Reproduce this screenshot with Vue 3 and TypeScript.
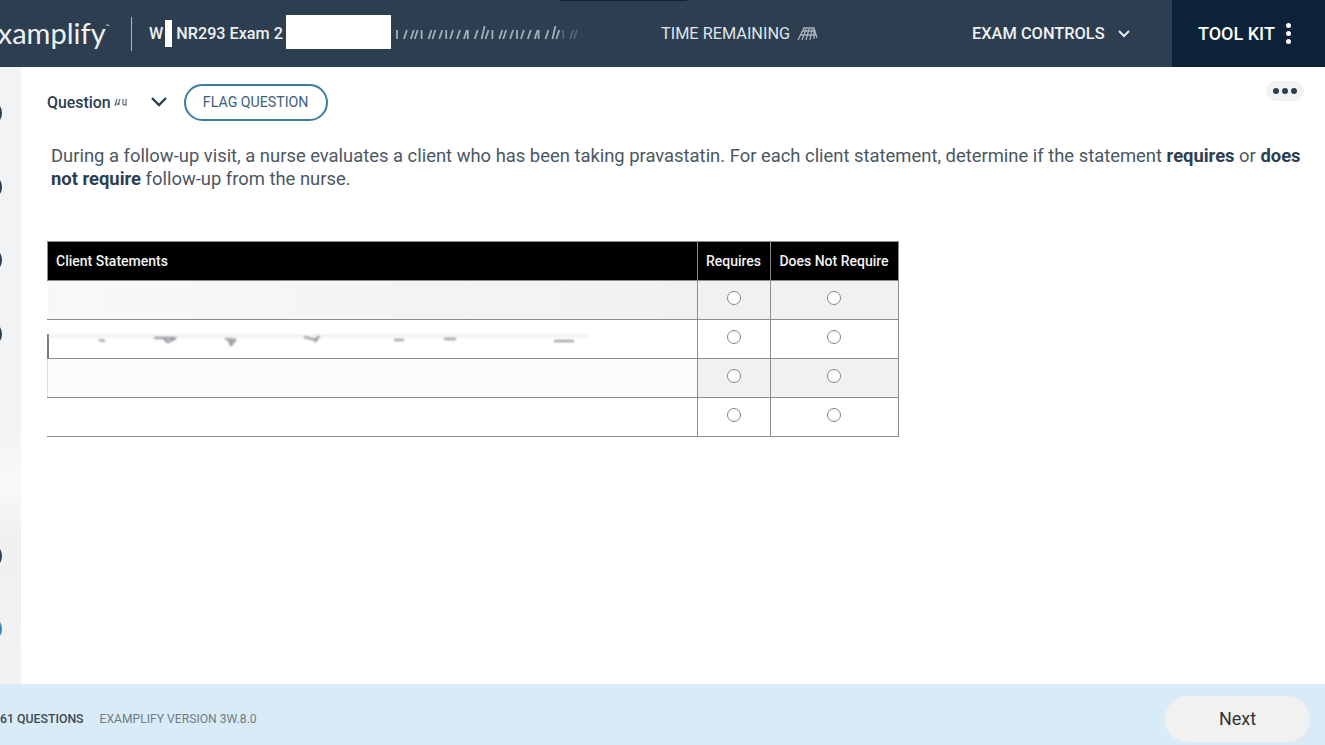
<script setup lang="ts">
interface Row {
  id: number
  shaded: boolean
}

const rows: Row[] = [
  { id: 1, shaded: true },
  { id: 2, shaded: false },
  { id: 3, shaded: true },
  { id: 4, shaded: false },
]

// sidebar markers, the two middle ones are wiped out in the screenshot
const markers = [true, true, true, true, false, false, true, true]

// smudged-out text next to the exam title
const headerMarks = Array.from({ length: 31 }, (_, i) => ({
  x: 2 + i * 5.9 + (i % 3),
  lean: i % 4 === 0 ? 0 : 3,
  top: i === 14 || i === 26 ? 2 : 6,
  dim: i > 27,
}))
</script>

<template>
  <div class="page">
    <div class="top-strip"></div>
    <header class="topbar">
      <div class="brand">Examplify<sup>™</sup></div>
      <div class="divider"></div>
      <div class="exam-title">
        <span>W</span>
        <i class="wipe-bar"></i>
        <span>NR293 Exam 2</span>
        <i class="wipe-box"></i>
      </div>
      <svg class="smudge" width="190" height="20" viewBox="0 0 190 20">
        <line
          v-for="(m, i) in headerMarks"
          :key="i"
          :x1="m.x + m.lean"
          :y1="m.top"
          :x2="m.x"
          y2="15"
          :stroke="m.dim ? '#55677a' : '#a3afba'"
          stroke-width="1.8"
        />
      </svg>
      <div class="time">
        <span>TIME REMAINING</span>
        <svg class="blurred" width="26" height="20" viewBox="0 0 26 20">
          <path d="M3 16 9 4h10l3 10M7 16l4-11M11 16l3-11M15 16l2-11M19 15V5M5 11h16M8 7h12" fill="none" stroke="#a9b3bd" stroke-width="1.3" />
        </svg>
      </div>
      <div class="controls">
        <span>EXAM CONTROLS</span>
        <svg width="14" height="10" viewBox="0 0 14 10">
          <path d="M2 2l5 5 5-5" fill="none" stroke="#e6eaee" stroke-width="2" />
        </svg>
      </div>
      <div class="toolkit">
        <span>TOOL KIT</span>
        <div class="kebab"><i></i><i></i><i></i></div>
      </div>
    </header>

    <div class="middle">
      <aside class="sidebar">
        <div v-for="(on, i) in markers" :key="i" class="marker">
          <i v-if="on" :class="{ blue: i === 7 }"></i>
        </div>
      </aside>

      <main class="content">
        <div class="question-bar">
          <span class="q-label">Question</span>
          <svg class="q-num blurred" width="16" height="10" viewBox="0 0 16 10">
            <path d="M2 9l2-7M5 8l2-6M7 7h-5M10 2v5q1 2 2 0M13 2v7" fill="none" stroke="#5a6672" stroke-width="1.2" />
          </svg>
          <svg class="q-chevron" width="18" height="12" viewBox="0 0 18 12">
            <path d="M2 2l7 7 7-7" fill="none" stroke="#2c3e50" stroke-width="2.4" />
          </svg>
          <button class="flag">FLAG QUESTION</button>
          <div class="more"><i></i><i></i><i></i></div>
        </div>

        <p class="stem">
          During a follow-up visit, a nurse evaluates a client who has been taking pravastatin. For each client statement, determine if the statement <b>requires</b> or <b>does not require</b> follow-up from the nurse.
        </p>

        <table class="grid">
          <thead>
            <tr>
              <th class="statement">Client Statements</th>
              <th class="req">Requires</th>
              <th class="noreq">Does Not Require</th>
            </tr>
          </thead>
          <tbody>
            <tr v-for="row in rows" :key="row.id">
              <td class="statement" :class="{ wiped: row.id === 1, faded: row.id === 3 }">
                <i v-if="row.id === 2" class="edge-mark"></i>
                <svg v-if="row.id === 2" class="smudged" width="540" height="16" viewBox="0 0 540 16">
                  <path d="M0 5h540" stroke="#efefef" stroke-width="3" />
                  <path d="M50 9l6 1M105 7h22l-8 4-4-3M176 8l10 1-4 5-2-5M255 6l12 3 3-4-4 6M345 9h10M395 8h12M505 10h20" fill="none" stroke="#8f9397" stroke-width="2.2" />
                </svg>
              </td>
              <td :class="{ shaded: row.shaded }"><span class="radio"></span></td>
              <td :class="{ shaded: row.shaded }"><span class="radio"></span></td>
            </tr>
          </tbody>
        </table>
      </main>
    </div>

    <footer class="footer">
      <span class="count">61 QUESTIONS</span>
      <span class="version">EXAMPLIFY VERSION 3W.8.0</span>
      <button class="next">Next</button>
    </footer>
  </div>
</template>

<style>
html,
body {
  margin: 0;
  background: #fff;
  overflow: hidden;
}
</style>

<style scoped>
.page {
  position: relative;
  width: 1325px;
  height: 745px;
  display: flex;
  flex-direction: column;
  overflow: hidden;
  font-family: Roboto, "Liberation Sans", sans-serif;
  color: #2c3e50;
}

.top-strip {
  position: absolute;
  left: 560px;
  top: 0;
  width: 127px;
  height: 1px;
  background: #10202e;
}

.blurred {
  filter: blur(0.6px);
}

.smudged {
  filter: blur(1px);
}

/* ---------- TOP BAR ---------- */

.topbar {
  height: 67px;
  flex: none;
  display: flex;
  align-items: center;
  background: #2d3e50;
  color: #eef1f3;
}

.brand {
  margin-left: -19px;
  width: 150px;
  margin-top: -3px;
  font-family: Lato, sans-serif;
  font-size: 29px;
  font-weight: 400;
  white-space: nowrap;
  color: #eef1f3;
}

.brand sup {
  font-size: 5px;
  vertical-align: 16px;
}

.divider {
  width: 1px;
  height: 34px;
  background: #aeb7bf;
  margin-right: 17px;
}

.exam-title {
  display: flex;
  align-items: center;
  font-size: 16.2px;
  font-weight: 500;
  width: 243px;
  white-space: nowrap;
}

.wipe-bar {
  width: 7px;
  height: 27px;
  background: #fff;
  margin: 0 4px 0 2px;
}

.wipe-box {
  flex: none;
  width: 105px;
  height: 34px;
  background: #fff;
  margin-left: 3px;
  margin-top: -4px;
}

.smudge {
  margin-left: 3px;
  width: 190px;
  flex: none;
  filter: blur(0.7px);
}

.time {
  margin-left: 76px;
  width: 311px;
  display: flex;
  align-items: center;
  gap: 5px;
  font-size: 16.3px;
  color: #dfe4e8;
  white-space: nowrap;
}

.controls {
  width: 200px;
  display: flex;
  align-items: center;
  gap: 12px;
  font-size: 16.4px;
  font-weight: 500;
  white-space: nowrap;
}

.toolkit {
  flex: 1;
  height: 100%;
  box-sizing: border-box;
  padding-left: 26px;
  display: flex;
  align-items: center;
  gap: 11px;
  background: #0b2239;
  font-size: 18px;
  font-weight: 500;
  color: #fff;
}

.kebab {
  display: flex;
  flex-direction: column;
  gap: 3px;
}

.kebab i {
  width: 5px;
  height: 5px;
  border-radius: 50%;
  background: #fff;
}

/* ---------- SIDE RAIL ---------- */

.middle {
  flex: 1;
  display: flex;
  min-height: 0;
}

.sidebar {
  width: 21px;
  flex: none;
  box-sizing: border-box;
  padding-top: 9px;
  background: linear-gradient(180deg, #f2f3f4 0, #f2f3f4 58%, #f9f9f9 68%, #f0f0f0 76%, #f2f2f2 100%);
  overflow: hidden;
}

.marker {
  height: 73.8px;
  display: flex;
  align-items: center;
}

.marker i {
  flex: none;
  width: 26px;
  height: 26px;
  margin-left: -24px;
  box-sizing: border-box;
  border: 2px solid #2d3e50;
  border-radius: 50%;
}

.marker i.blue {
  border-color: #3d86b0;
}

/* ---------- QUESTION ---------- */

.content {
  flex: 1;
  box-sizing: border-box;
  padding: 17px 24px 0 26px;
  min-width: 0;
}

.question-bar {
  display: flex;
  align-items: center;
  height: 36px;
}

.q-label {
  font-size: 15.9px;
  font-weight: 500;
}

.q-num {
  margin-left: 2px;
}

.q-chevron {
  margin-left: 21px;
}

.flag {
  margin-left: 16px;
  width: 144px;
  height: 37px;
  box-sizing: border-box;
  border: 2px solid #3d7d9f;
  border-radius: 19px;
  background: #fff;
  color: #3d6079;
  font-family: inherit;
  font-size: 14.2px;
  font-weight: 400;
  padding: 0;
}

.more {
  margin-left: auto;
  margin-top: -22px;
  margin-right: -3px;
  width: 38px;
  height: 20px;
  border-radius: 10px;
  background: #f1f2f4;
  display: flex;
  align-items: center;
  justify-content: center;
  gap: 3px;
}

.more i {
  width: 6px;
  height: 6px;
  border-radius: 50%;
  background: #2d3e50;
}

.stem {
  margin: 24px 0 0 4px;
  font-size: 18.4px;
  line-height: 23px;
  color: #4a5763;
}

.stem b {
  font-weight: 700;
  color: #2d3e50;
}

/* ---------- TABLE ---------- */

.grid {
  margin-top: 51px;
  width: 851.5px;
  border-collapse: collapse;
  table-layout: fixed;
}

.grid th {
  height: 38px;
  padding: 0;
  background: #000;
  color: #f2f2f2;
  font-size: 14px;
  font-weight: 500;
  border: 1px solid #8c8c8c;
  text-align: center;
}

.grid th.statement {
  text-align: left;
  padding-left: 8px;
  border-right-color: #8c8c8c;
}

.grid th.req {
  width: 72px;
}

.grid th.noreq {
  width: 127px;
}

.grid td {
  height: 39px;
  box-sizing: border-box;
  padding: 0 0 7px;
  border: 1px solid #8c8c8c;
  text-align: center;
}

.grid td.statement {
  position: relative;
  padding: 0 0 0 1px;
  text-align: left;
  border-left-color: #fff;
}

.grid td.wiped {
  background: linear-gradient(90deg, #f8f8f8, #f1f1f1);
}

.grid td.faded {
  background: #fcfcfc;
  border-left-color: #ddd;
}

.grid td.statement svg {
  display: block;
}

.edge-mark {
  position: absolute;
  left: -1px;
  top: 14px;
  width: 2px;
  height: 24px;
  background: #77797b;
}

.grid td.shaded {
  background: #f1f1f1;
}

.radio {
  display: inline-block;
  vertical-align: middle;
  width: 14px;
  height: 14px;
  box-sizing: border-box;
  border: 1px solid #858585;
  border-radius: 50%;
  background: #fff;
}

/* ---------- FOOTER ---------- */

.footer {
  height: 61px;
  flex: none;
  box-sizing: border-box;
  padding-top: 8px;
  display: flex;
  align-items: center;
  background: #d9ebf6;
  white-space: nowrap;
}

.count {
  font-size: 12.3px;
  font-weight: 500;
  color: #3b4a58;
}

.version {
  margin-left: 16px;
  font-size: 12.15px;
  color: #6f7c88;
}

.next {
  margin-left: auto;
  margin-right: 15px;
  width: 145px;
  height: 46px;
  border: none;
  border-radius: 23px;
  background: #f1f1f1;
  color: #333;
  font-family: inherit;
  font-size: 18px;
}
</style>
